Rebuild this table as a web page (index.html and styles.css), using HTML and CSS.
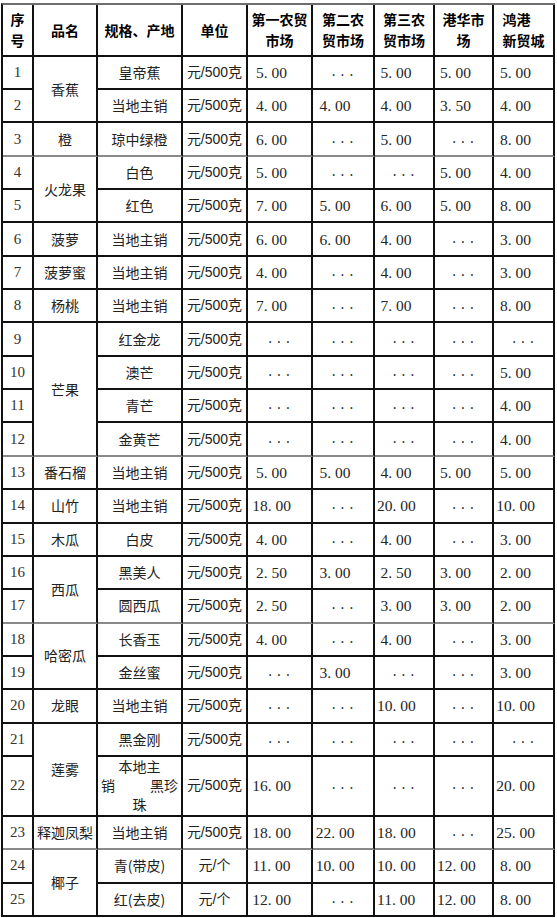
FILE: index.html
```html
<!DOCTYPE html>
<html lang="zh-CN">
<head>
<meta charset="utf-8">
<title>水果价格表</title>
<link rel="stylesheet" href="styles.css">
</head>
<body>
<table class="price">
  <colgroup>
    <col class="c-sn"><col class="c-name"><col class="c-spec"><col class="c-unit">
    <col class="c-m1"><col class="c-m2"><col class="c-m3"><col class="c-m4"><col class="c-m5">
  </colgroup>
  <thead>
    <tr class="head">
      <th>序<br>号</th>
      <th>品名</th>
      <th>规格、产地</th>
      <th>单位</th>
      <th>第一农贸<br>市场</th>
      <th>第二农<br>贸市场</th>
      <th>第三农<br>贸市场</th>
      <th>港华市<br>场</th>
      <th><span class="lb">鸿港<br>新贸城</span></th>
    </tr>
  </thead>
  <tbody>
    <tr>
      <td class="sn">1</td><td class="name" rowspan="2">香蕉</td><td>皇帝蕉</td><td class="unit">元/500克</td>
      <td class="n">5<i>.</i>00</td><td class="d">...</td><td class="n">5<i>.</i>00</td><td class="n">5<i>.</i>00</td><td class="n">5<i>.</i>00</td>
    </tr>
    <tr>
      <td class="sn">2</td><td>当地主销</td><td class="unit">元/500克</td>
      <td class="n">4<i>.</i>00</td><td class="n">4<i>.</i>00</td><td class="n">4<i>.</i>00</td><td class="n">3<i>.</i>50</td><td class="n">4<i>.</i>00</td>
    </tr>
    <tr class="gl">
      <td class="sn">3</td><td class="name">橙</td><td>琼中绿橙</td><td class="unit">元/500克</td>
      <td class="n">6<i>.</i>00</td><td class="d">...</td><td class="n">5<i>.</i>00</td><td class="d">...</td><td class="n">8<i>.</i>00</td>
    </tr>
    <tr>
      <td class="sn">4</td><td class="name" rowspan="2">火龙果</td><td>白色</td><td class="unit">元/500克</td>
      <td class="n">5<i>.</i>00</td><td class="d">...</td><td class="d">...</td><td class="n">5<i>.</i>00</td><td class="n">4<i>.</i>00</td>
    </tr>
    <tr>
      <td class="sn">5</td><td>红色</td><td class="unit">元/500克</td>
      <td class="n">7<i>.</i>00</td><td class="n">5<i>.</i>00</td><td class="n">6<i>.</i>00</td><td class="n">5<i>.</i>00</td><td class="n">8<i>.</i>00</td>
    </tr>
    <tr>
      <td class="sn">6</td><td class="name">菠萝</td><td>当地主销</td><td class="unit">元/500克</td>
      <td class="n">6<i>.</i>00</td><td class="n">6<i>.</i>00</td><td class="n">4<i>.</i>00</td><td class="d">...</td><td class="n">3<i>.</i>00</td>
    </tr>
    <tr>
      <td class="sn">7</td><td class="name">菠萝蜜</td><td>当地主销</td><td class="unit">元/500克</td>
      <td class="n">4<i>.</i>00</td><td class="d">...</td><td class="n">4<i>.</i>00</td><td class="d">...</td><td class="n">3<i>.</i>00</td>
    </tr>
    <tr>
      <td class="sn">8</td><td class="name">杨桃</td><td>当地主销</td><td class="unit">元/500克</td>
      <td class="n">7<i>.</i>00</td><td class="d">...</td><td class="n">7<i>.</i>00</td><td class="d">...</td><td class="n">8<i>.</i>00</td>
    </tr>
    <tr>
      <td class="sn">9</td><td class="name gl" rowspan="4">芒果</td><td>红金龙</td><td class="unit">元/500克</td>
      <td class="d">...</td><td class="d">...</td><td class="d">...</td><td class="d">...</td><td class="d">...</td>
    </tr>
    <tr>
      <td class="sn">10</td><td>澳芒</td><td class="unit">元/500克</td>
      <td class="d">...</td><td class="d">...</td><td class="d">...</td><td class="d">...</td><td class="n">5<i>.</i>00</td>
    </tr>
    <tr>
      <td class="sn">11</td><td>青芒</td><td class="unit">元/500克</td>
      <td class="d">...</td><td class="d">...</td><td class="d">...</td><td class="d">...</td><td class="n">4<i>.</i>00</td>
    </tr>
    <tr class="gl">
      <td class="sn">12</td><td>金黄芒</td><td class="unit">元/500克</td>
      <td class="d">...</td><td class="d">...</td><td class="d">...</td><td class="d">...</td><td class="n">4<i>.</i>00</td>
    </tr>
    <tr>
      <td class="sn">13</td><td class="name">番石榴</td><td>当地主销</td><td class="unit">元/500克</td>
      <td class="n">5<i>.</i>00</td><td class="n">5<i>.</i>00</td><td class="n">4<i>.</i>00</td><td class="n">5<i>.</i>00</td><td class="n">5<i>.</i>00</td>
    </tr>
    <tr>
      <td class="sn">14</td><td class="name">山竹</td><td>当地主销</td><td class="unit">元/500克</td>
      <td class="n">18<i>.</i>00</td><td class="d">...</td><td class="n">20<i>.</i>00</td><td class="d">...</td><td class="n">10<i>.</i>00</td>
    </tr>
    <tr>
      <td class="sn">15</td><td class="name">木瓜</td><td>白皮</td><td class="unit">元/500克</td>
      <td class="n">4<i>.</i>00</td><td class="d">...</td><td class="n">4<i>.</i>00</td><td class="d">...</td><td class="n">3<i>.</i>00</td>
    </tr>
    <tr>
      <td class="sn">16</td><td class="name gl" rowspan="2">西瓜</td><td>黑美人</td><td class="unit">元/500克</td>
      <td class="n">2<i>.</i>50</td><td class="n">3<i>.</i>00</td><td class="n">2<i>.</i>50</td><td class="n">3<i>.</i>00</td><td class="n">2<i>.</i>00</td>
    </tr>
    <tr class="gl">
      <td class="sn">17</td><td>圆西瓜</td><td class="unit">元/500克</td>
      <td class="n">2<i>.</i>50</td><td class="d">...</td><td class="n">3<i>.</i>00</td><td class="n">3<i>.</i>00</td><td class="n">2<i>.</i>00</td>
    </tr>
    <tr>
      <td class="sn">18</td><td class="name" rowspan="2">哈密瓜</td><td>长香玉</td><td class="unit">元/500克</td>
      <td class="n">4<i>.</i>00</td><td class="d">...</td><td class="n">4<i>.</i>00</td><td class="d">...</td><td class="n">3<i>.</i>00</td>
    </tr>
    <tr>
      <td class="sn">19</td><td>金丝蜜</td><td class="unit">元/500克</td>
      <td class="d">...</td><td class="n">3<i>.</i>00</td><td class="d">...</td><td class="d">...</td><td class="n">3<i>.</i>00</td>
    </tr>
    <tr>
      <td class="sn">20</td><td class="name">龙眼</td><td>当地主销</td><td class="unit">元/500克</td>
      <td class="d">...</td><td class="d">...</td><td class="n">10<i>.</i>00</td><td class="d">...</td><td class="n">10<i>.</i>00</td>
    </tr>
    <tr>
      <td class="sn">21</td><td class="name" rowspan="2">莲雾</td><td>黑金刚</td><td class="unit">元/500克</td>
      <td class="d">...</td><td class="d">...</td><td class="d">...</td><td class="d">...</td><td class="d">...</td>
    </tr>
    <tr class="tall">
      <td class="sn">22</td>
      <td class="spec3">
        <div class="ln">本地主</div>
        <div class="ln split"><span>销</span><span>黑珍</span></div>
        <div class="ln">珠</div>
      </td>
      <td class="unit">元/500克</td>
      <td class="n">16<i>.</i>00</td><td class="d">...</td><td class="d">...</td><td class="d">...</td><td class="n">20<i>.</i>00</td>
    </tr>
    <tr class="gl">
      <td class="sn">23</td><td class="name">释迦凤梨</td><td>当地主销</td><td class="unit">元/500克</td>
      <td class="n">18<i>.</i>00</td><td class="n">22<i>.</i>00</td><td class="n">18<i>.</i>00</td><td class="d">...</td><td class="n">25<i>.</i>00</td>
    </tr>
    <tr>
      <td class="sn">24</td><td class="name" rowspan="2">椰子</td><td>青(带皮)</td><td class="unit">元/个</td>
      <td class="n">11<i>.</i>00</td><td class="n">10<i>.</i>00</td><td class="n">10<i>.</i>00</td><td class="n">12<i>.</i>00</td><td class="n">8<i>.</i>00</td>
    </tr>
    <tr>
      <td class="sn">25</td><td>红(去皮)</td><td class="unit">元/个</td>
      <td class="n">12<i>.</i>00</td><td class="d">...</td><td class="n">11<i>.</i>00</td><td class="n">12<i>.</i>00</td><td class="n">8<i>.</i>00</td>
    </tr>
  </tbody>
</table>
</body>
</html>
```

FILE: styles.css
```css
html, body {
  margin: 0;
  padding: 0;
  background: #ffffff;
}

.price {
  margin: 3px 0 0 1px;
  width: 554px;
  table-layout: fixed;
  border-collapse: separate;
  border-spacing: 0;
  border-left: 2px solid #111111;
  border-top: 2px solid #6e6e6e;
  font-family: "Noto Sans CJK SC", sans-serif;
  font-size: 14px;
  color: #222222;
}

.c-sn { width: 31px; }
.c-name { width: 64px; }
.c-spec { width: 85px; }
.c-unit { width: 65px; }
.c-m1 { width: 65px; }
.c-m2 { width: 62px; }
.c-m3 { width: 60px; }
.c-m4 { width: 59px; }
.c-m5 { width: 61px; }

.price th,
.price td {
  border-right: 2px solid #111111;
  border-bottom: 2px solid #111111;
  padding: 0 3px;
  text-align: center;
  vertical-align: middle;
  line-height: 19px;
  white-space: nowrap;
  overflow: visible;
}

.price th {
  font-weight: bold;
  color: #000000;
  line-height: 21px;
  padding-top: 1px;
}

.head { height: 51.7px; }
.price tbody tr { height: 33.35px; }
.price tbody tr.tall { height: 60px; }

.price tr.gl td,
.price td.gl {
  border-bottom-color: #8a8a8a;
}

.lb {
  display: inline-block;
  text-align: left;
}

.price td.sn {
  font-family: "Liberation Serif", serif;
  font-size: 15px;
  color: #333333;
  padding: 0;
}

.price td.unit {
  font-family: "Liberation Sans", "Noto Sans CJK SC", sans-serif;
  font-size: 14px;
  padding: 0 1px;
}

.price td.n {
  font-family: "Liberation Serif", serif;
  font-size: 15.5px;
  color: #262626;
  padding: 0 18px 0 2px;
}

.price td.n i {
  font-style: normal;
  padding-right: 0.25em;
}

.price td.d {
  font-family: "Liberation Mono", monospace;
  font-size: 13px;
  color: #333333;
  letter-spacing: 1px;
  padding: 0;
}

.spec3 {
  padding: 0 3px;
}

.ln {
  line-height: 19px;
  text-align: center;
}

.split {
  display: flex;
  justify-content: space-between;
}
```
